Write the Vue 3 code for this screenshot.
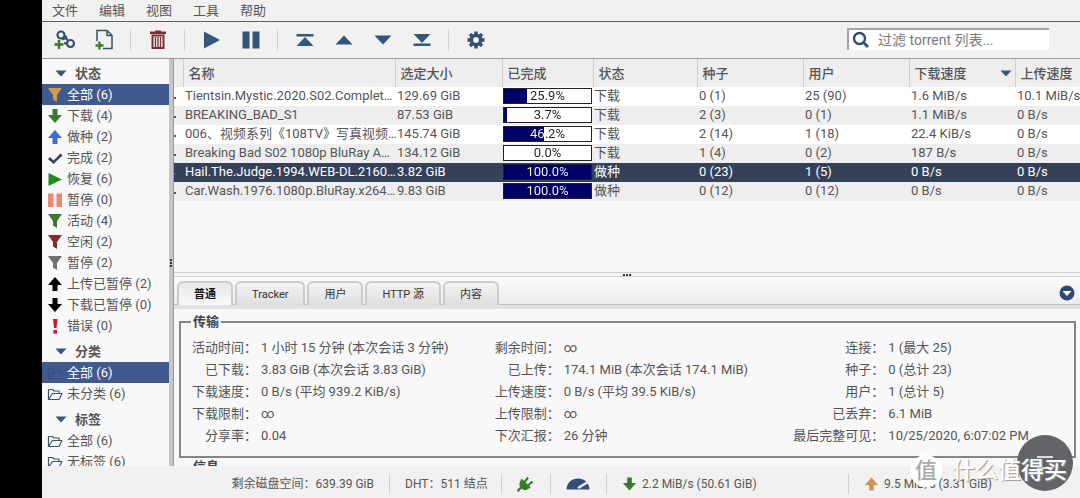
<script setup>
import { ref } from 'vue'

const menus = ['文件', '编辑', '视图', '工具', '帮助']

const sections = [
  {
    title: '状态',
    items: [
      { icon: 'funnel', color: '#d39a4e', label: '全部 (6)', selected: true },
      { icon: 'down', color: '#3b7a2a', label: '下载 (4)' },
      { icon: 'up', color: '#4468d8', label: '做种 (2)' },
      { icon: 'check', color: '#2c4663', label: '完成 (2)' },
      { icon: 'play', color: '#228b22', label: '恢复 (6)' },
      { icon: 'pause', color: '#ee8676', label: '暂停 (0)' },
      { icon: 'funnel', color: '#3b7a2a', label: '活动 (4)' },
      { icon: 'funnel', color: '#7c2f33', label: '空闲 (2)' },
      { icon: 'funnel', color: '#717171', label: '暂停 (2)' },
      { icon: 'up', color: '#000000', label: '上传已暂停 (2)' },
      { icon: 'down', color: '#000000', label: '下载已暂停 (0)' },
      { icon: 'error', color: '#d01820', label: '错误 (0)' }
    ]
  },
  {
    title: '分类',
    items: [
      { icon: 'folder', color: '#34527c', label: '全部 (6)', selected: true },
      { icon: 'folder', color: '#3d566e', label: '未分类 (6)' }
    ]
  },
  {
    title: '标签',
    items: [
      { icon: 'folder', color: '#3d566e', label: '全部 (6)' },
      { icon: 'folder', color: '#3d566e', label: '无标签 (6)' }
    ]
  }
]

const columns = ['', '名称', '选定大小', '已完成', '状态', '种子', '用户', '下载速度', '上传速度']

const torrents = [
  { name: 'Tientsin.Mystic.2020.S02.Complet…', size: '129.69 GiB', done: 25.9, state: '下载', seeds: '0 (1)', peers: '25 (90)', down: '1.6 MiB/s', up: '10.1 MiB/s' },
  { name: 'BREAKING_BAD_S1', size: '87.53 GiB', done: 3.7, state: '下载', seeds: '2 (3)', peers: '0 (1)', down: '1.1 MiB/s', up: '0 B/s' },
  { name: '006、视频系列《108TV》写真视频…', size: '145.74 GiB', done: 46.2, state: '下载', seeds: '2 (14)', peers: '1 (18)', down: '22.4 KiB/s', up: '0 B/s' },
  { name: 'Breaking Bad S02 1080p BluRay A…', size: '134.12 GiB', done: 0, state: '下载', seeds: '1 (4)', peers: '0 (2)', down: '187 B/s', up: '0 B/s' },
  { name: 'Hail.The.Judge.1994.WEB-DL.2160…', size: '3.82 GiB', done: 100, state: '做种', seeds: '0 (23)', peers: '1 (5)', down: '0 B/s', up: '0 B/s', selected: true },
  { name: 'Car.Wash.1976.1080p.BluRay.x264…', size: '9.83 GiB', done: 100, state: '做种', seeds: '0 (12)', peers: '0 (12)', down: '0 B/s', up: '0 B/s' }
]

const tabs = ['普通', 'Tracker', '用户', 'HTTP 源', '内容']
const activeTab = ref('普通')
const filter = ref('')

const details = [
  [
    ['活动时间：', '1 小时 15 分钟 (本次会话 3 分钟)'],
    ['已下载：', '3.83 GiB (本次会话 3.83 GiB)'],
    ['下载速度：', '0 B/s (平均 939.2 KiB/s)'],
    ['下载限制：', '∞'],
    ['分享率：', '0.04']
  ],
  [
    ['剩余时间：', '∞'],
    ['已上传：', '174.1 MiB (本次会话 174.1 MiB)'],
    ['上传速度：', '0 B/s (平均 39.5 KiB/s)'],
    ['上传限制：', '∞'],
    ['下次汇报：', '26 分钟']
  ],
  [
    ['连接：', '1 (最大 25)'],
    ['种子：', '0 (总计 23)'],
    ['用户：', '1 (总计 5)'],
    ['已丢弃：', '6.1 MiB'],
    ['最后完整可见：', '10/25/2020, 6:07:02 PM']
  ]
]

const shapes = {
  funnel: 'M1 1H15L10 8V15L6 12.500V8Z',
  down: 'M5.500 1H10.500V7H15L8 15L1 7H5.500Z',
  up: 'M5.500 15H10.500V9H15L8 1L1 9H5.500Z',
  check: 'M3 7L6.500 10.500L13.500 3.500L15.500 5.500L6.500 14L1 9Z',
  play: 'M1.500 2L15 8.500L1.500 15Z',
  pause: 'M1 1.500H6.500V15H1ZM9.500 1.500H15V15H9.500Z',
  error: 'M6 1H10.500L9.500 10H7ZM6.300 12H10V15.500H6.300Z'
}

const barFill = (p) => ({ backgroundImage: `linear-gradient(90deg, #000066 ${p}%, #ffffff ${p}%)` })
const barText = (p) => ({ backgroundImage: `linear-gradient(90deg, #ffffff ${p}%, #222222 ${p}%)` })
</script>

<template>
  <div class="window">
    <nav class="menubar">
      <button v-for="m in menus" :key="m" type="button">{{ m }}</button>
    </nav>

    <header class="toolbar">
      <button type="button" aria-label="添加链接">
        <svg width="22" height="20" viewBox="0 0 22 20" fill="none">
          <circle cx="7" cy="5" r="3.500" stroke="#34506f" stroke-width="2.200" />
          <circle cx="16.500" cy="13.500" r="3.500" stroke="#34506f" stroke-width="2.200" />
          <path d="M8 9.500L12 8L14 11M10 13L13.500 14M11 5.500L13 8" stroke="#34506f" stroke-width="2" />
          <path d="M5 10V19M0.500 14.500H9.500" stroke="#3b7a2a" stroke-width="2.500" />
        </svg>
      </button>
      <button type="button" aria-label="添加文件">
        <svg width="20" height="22" viewBox="0 0 20 22" fill="none">
          <path d="M3 12V1.500H13L18 6.500V19.500H9M13 1.500V6.500H18" stroke="#34506f" stroke-width="1.500" />
          <path d="M5.500 12.500V20.500M1.500 16.500H9.500" stroke="#3b7a2a" stroke-width="2.300" />
        </svg>
      </button>
      <i class="sep"></i>
      <button type="button" aria-label="删除">
        <svg width="18" height="20" viewBox="0 0 18 20">
          <path d="M1 1.500H6V0.500H12V1.500H17V4H1Z" fill="#7c2f33" />
          <path d="M3.500 5.500V18H14.500V5.500Z" fill="none" stroke="#7c2f33" stroke-width="2" />
          <path d="M6.500 7V17M9 7V17M11.500 7V17" stroke="#7c2f33" stroke-width="1.300" />
        </svg>
      </button>
      <i class="sep"></i>
      <button type="button" aria-label="恢复">
        <svg width="18" height="18" viewBox="0 0 18 18"><path d="M1 0.500L17 9L1 17.500Z" fill="#34567a" /></svg>
      </button>
      <button type="button" aria-label="暂停">
        <svg width="18" height="18" viewBox="0 0 18 18"><path d="M0.500 0.500H7.500V17.500H0.500ZM10.500 0.500H17.500V17.500H10.500Z" fill="#34567a" /></svg>
      </button>
      <i class="sep"></i>
      <button type="button" aria-label="移到顶部">
        <svg width="18" height="12" viewBox="0 0 18 12"><path d="M0.500 0H17.500V2.500H0.500ZM0.500 12L9 3L17.500 12Z" fill="#34567a" /></svg>
      </button>
      <button type="button" aria-label="上移">
        <svg width="18" height="10" viewBox="0 0 18 10"><path d="M0.500 9.500L9 0.500L17.500 9.500Z" fill="#34567a" /></svg>
      </button>
      <button type="button" aria-label="下移">
        <svg width="18" height="10" viewBox="0 0 18 10"><path d="M0.500 0.500L9 9.500L17.500 0.500Z" fill="#34567a" /></svg>
      </button>
      <button type="button" aria-label="移到底部">
        <svg width="18" height="12" viewBox="0 0 18 12"><path d="M0.500 0H17.500L9 9ZM0.500 9.500H17.500V12H0.500Z" fill="#34567a" /></svg>
      </button>
      <i class="sep"></i>
      <button type="button" aria-label="选项">
        <svg width="18" height="18" viewBox="0 0 18 18" fill="none" stroke="#34506f">
          <circle cx="9" cy="9" r="4.700" stroke-width="3.600" />
          <path d="M9 0.500V3M9 15V17.500M0.500 9H3M15 9H17.500M3 3L4.800 4.800M13.200 13.200L15 15M3 15L4.800 13.200M13.200 4.800L15 3" stroke-width="3.400" />
        </svg>
      </button>
      <label class="search">
        <svg width="18" height="18" viewBox="0 0 18 18" fill="none" stroke="#2f4c70">
          <circle cx="7.500" cy="7.500" r="5.500" stroke-width="2.400" />
          <path d="M11.500 11.500L16 16" stroke-width="2.800" />
        </svg>
        <input v-model="filter" type="text" placeholder="过滤 torrent 列表..." aria-label="过滤 torrent 列表">
      </label>
    </header>

    <div class="body">
      <aside class="sidebar">
        <section v-for="s in sections" :key="s.title">
          <h2>
            <button type="button">
              <svg width="12" height="7" viewBox="0 0 12 7"><path d="M0.500 0.500H11.500L6 6.500Z" fill="#34567a" /></svg>
              {{ s.title }}
            </button>
          </h2>
          <ul>
            <li v-for="i in s.items" :key="i.label + i.color">
              <a href="#" :class="{ selected: i.selected }">
                <svg width="16" height="16" viewBox="0 0 16 16">
                  <path v-if="i.icon === 'folder'" d="M1.500 13.500V3.500H5.500L7 5H12V7M1.500 13.500L5.500 7.500H15L12 13.500Z" fill="none" :stroke="i.color" stroke-width="1.200" stroke-linejoin="round" />
                  <path v-else :d="shapes[i.icon]" :fill="i.color" />
                </svg>
                {{ i.label }}
              </a>
            </li>
          </ul>
        </section>
      </aside>

      <div class="vsplit"><i></i><i></i><i></i></div>

      <main class="content">
        <div class="torrents">
          <table>
            <colgroup>
              <col class="c-dot"><col class="c-name"><col class="c-size"><col class="c-done"><col class="c-state">
              <col class="c-num"><col class="c-num"><col class="c-num"><col class="c-num">
            </colgroup>
            <thead>
              <tr>
                <th v-for="c in columns" :key="c" scope="col">
                  <span class="head">
                    {{ c }}
                    <svg v-if="c === '下载速度'" width="12" height="7" viewBox="0 0 12 7"><path d="M0.500 0.500H11.500L6 6.500Z" fill="#34567a" /></svg>
                  </span>
                </th>
              </tr>
            </thead>
            <tbody>
              <tr v-for="t in torrents" :key="t.name" :class="{ selected: t.selected }">
                <td class="dot"><i></i></td>
                <td>{{ t.name }}</td>
                <td>{{ t.size }}</td>
                <td class="progress">
                  <div class="bar" :style="barFill(t.done)"><span :style="barText(t.done)">{{ t.done.toFixed(1) }}%</span></div>
                </td>
                <td class="state">{{ t.state }}</td>
                <td>{{ t.seeds }}</td>
                <td>{{ t.peers }}</td>
                <td>{{ t.down }}</td>
                <td>{{ t.up }}</td>
              </tr>
            </tbody>
          </table>
        </div>

        <div class="hsplit"><i></i><i></i><i></i></div>

        <div class="tabs">
          <button v-for="t in tabs" :key="t" type="button" :class="{ active: t === activeTab }" @click="activeTab = t">{{ t }}</button>
          <button type="button" class="collapse" aria-label="折叠">
            <svg width="16" height="16" viewBox="0 0 16 16"><circle cx="8" cy="8" r="7.500" fill="#2f4a70" /><path d="M3.500 6H12.500L8 11Z" fill="#fff" /></svg>
          </button>
        </div>

        <div class="panel">
          <fieldset>
            <legend>传输</legend>
            <div class="groups">
              <dl v-for="(g, n) in details" :key="n" :class="'g' + n">
                <template v-for="row in g" :key="row[0]">
                  <dt>{{ row[0] }}</dt>
                  <dd>{{ row[1] }}</dd>
                </template>
              </dl>
            </div>
          </fieldset>
          <fieldset>
            <legend>信息</legend>
          </fieldset>
        </div>
      </main>
    </div>

    <footer class="status">
      <span class="disk">剩余磁盘空间：639.39 GiB</span>
      <span>DHT：511 结点</span>
      <span>
        <button type="button" aria-label="连接状态">
          <svg width="16" height="16" viewBox="0 0 16 16">
            <path d="M1 15.500C1.500 12.500 3 13 4.500 11.500" fill="none" stroke="#3b7a2a" stroke-width="2.400" />
            <path d="M4.500 4L12.500 11.500C10.500 14.500 7 15 4.500 12.500C1.500 10 2 6 4.500 4Z" fill="#3b7a2a" />
            <path d="M4 3.500L13 12M7 7L11 1.500M10.500 10L15.500 5.500" stroke="#3b7a2a" stroke-width="2.200" />
          </svg>
        </button>
      </span>
      <span>
        <button type="button" aria-label="备用速度限制">
          <svg width="24" height="12" viewBox="0 0 24 12">
            <path d="M0.500 11.500C1 4 6 0.500 12 0.500S23 4 23.500 11.500Z" fill="#34507a" />
            <path d="M12 10L22 4" stroke="#f1f1f1" stroke-width="2.400" />
          </svg>
        </button>
      </span>
      <span>
        <svg width="15" height="16" viewBox="0 0 16 16"><path :d="shapes.down" fill="#3b7a2a" /></svg>
        2.2 MiB/s (50.61 GiB)
      </span>
      <span>
        <svg width="15" height="16" viewBox="0 0 16 16"><path :d="shapes.up" fill="#cf9450" /></svg>
        9.5 MiB/s (3.31 GiB)
      </span>
    </footer>

    <button type="button" class="fab" aria-label="菜单"><i></i><i></i></button>
    <div class="mark"><b>值</b><span>什么值得买</span></div>
  </div>
</template>

<style>
body {
  background: #000;
}
</style>

<style scoped>
.window {
  position: relative;
  display: flex;
  flex-direction: column;
  height: 100vh;
  box-sizing: border-box;
  padding-left: 42px;
  overflow: hidden;
  background: linear-gradient(90deg, #000 42px, #f1f1f1 42px);
  color: #555;
  font: 12px/19px Roboto, "Noto Sans CJK SC", sans-serif;
}
button {
  margin: 0;
  padding: 0;
  border: 0;
  background: none;
  color: inherit;
  font: inherit;
}
svg {
  flex: none;
  display: block;
}

.menubar {
  display: flex;
  flex: none;
  gap: 1px;
  height: 21px;
  border-bottom: 1px solid #606060;
}
.menubar button {
  padding: 0 10px;
  font-size: 13px;
}

.toolbar {
  display: flex;
  align-items: center;
  flex: none;
  height: 36px;
  padding: 0 31px 0 3px;
  border-bottom: 1px solid #9a9a9a;
}
.toolbar button {
  display: flex;
  align-items: center;
  justify-content: center;
  width: 39px;
  height: 30px;
}
.sep {
  width: 1px;
  height: 22px;
  margin: 0 7px;
  background: #cfcfcf;
}
.search {
  display: flex;
  align-items: center;
  gap: 8px;
  box-sizing: border-box;
  width: 202px;
  height: 22px;
  margin: 0 0 3px auto;
  padding-left: 3px;
  border: solid #a4a4a4;
  border-width: 2px 0 0 2px;
  background: #fff;
}
.search input {
  flex: 1;
  min-width: 0;
  padding: 0;
  border: 0;
  outline: 0;
  background: none;
  color: #555;
  font: 14px/18px Roboto, "Noto Sans CJK SC", sans-serif;
}
.search input::placeholder {
  color: #7b7b7b;
}

.body {
  display: flex;
  flex: 1;
  min-height: 0;
  background: #f8f8f8;
}
.sidebar {
  flex: none;
  width: 127px;
  overflow: hidden;
  font-size: 13px;
}
section + section {
  margin-top: 1px;
}
h2 {
  box-sizing: border-box;
  height: 25px;
  margin: 0;
  padding: 5px 0 0 13px;
  font-size: 13px;
  line-height: 19px;
}
h2 button {
  display: flex;
  align-items: center;
  gap: 8px;
}
ul {
  margin: 0;
  padding: 0;
  list-style: none;
}
li a {
  display: flex;
  align-items: center;
  gap: 4px;
  height: 21px;
  padding-left: 5px;
  color: inherit;
  text-decoration: none;
  white-space: nowrap;
}
li a.selected {
  background: #415a8e;
  color: #fff;
}

.vsplit {
  display: flex;
  flex-direction: column;
  align-items: center;
  justify-content: center;
  gap: 1px;
  flex: none;
  box-sizing: border-box;
  width: 5px;
  border-right: 1px solid #979797;
  background: #c6c6c6;
}
.vsplit i,
.hsplit i {
  width: 2px;
  height: 2px;
  background: #333;
}

.content {
  display: flex;
  flex-direction: column;
  flex: 1;
  min-width: 0;
}
.torrents {
  flex: none;
  height: 213px;
  overflow: hidden;
}
table {
  width: 947px;
  table-layout: fixed;
  border-collapse: collapse;
  font-size: 13px;
}
.c-dot { width: 9px; }
.c-name { width: 212px; }
.c-size { width: 107px; }
.c-done { width: 91px; }
.c-state { width: 104px; }
.c-num { width: 106px; }
th {
  height: 28px;
  padding: 0 3px 0 5px;
  border-right: 1px solid #cdcdcd;
  background: #eee;
  font-weight: 500;
  text-align: left;
}
th:first-child {
  padding: 0;
}
.head {
  display: flex;
  align-items: center;
  justify-content: space-between;
}
td {
  height: 19px;
  padding: 0 0 0 2px;
  line-height: 17px;
  vertical-align: top;
  white-space: nowrap;
}
tbody tr:nth-child(odd) { background: #fff; }
tbody tr:nth-child(even) { background: #eee; }
tbody tr.selected {
  background: #354158;
  color: #fff;
}
td.dot {
  padding: 0;
}
.dot i {
  display: block;
  width: 2px;
  height: 2px;
  margin-top: 10px;
  background: #555;
}
td.progress {
  box-sizing: border-box;
  padding: 1px 1px 0;
}
td.state {
  padding-left: 1px;
}
.bar {
  box-sizing: border-box;
  height: 16px;
  border: 1px solid #222;
  line-height: 14px;
  text-align: center;
}
.bar span {
  display: block;
  background-clip: text;
  color: transparent;
}

.hsplit {
  display: flex;
  align-items: center;
  justify-content: center;
  gap: 1px;
  flex: none;
  box-sizing: border-box;
  height: 5px;
  border: solid #d0d0d0;
  border-width: 1px 0;
  background: #f4f4f4;
}
.tabs {
  display: flex;
  align-items: flex-end;
  gap: 2px;
  flex: none;
  box-sizing: border-box;
  height: 32px;
  padding: 0 5px 0 3px;
  border-bottom: 4px solid #e2e2e2;
  background: linear-gradient(#fafafa, #ececec);
  box-shadow: inset 0 -1px #bdbdbd;
  color: #333;
}
.tabs button {
  box-sizing: border-box;
  height: 24px;
  padding: 0 15px;
  border: 2px solid #cbcbcb;
  border-bottom: 0;
  border-radius: 6px 6px 0 0;
  background: linear-gradient(#f4f4f4, #dedede);
  font-size: 11px;
}
.tabs button.active {
  background: linear-gradient(#e9e9e9, #f8f8f8);
  color: #111;
  font-weight: 700;
}
.tabs .collapse {
  margin: 0 0 0 auto;
  padding: 0;
  border: 0;
  background: none;
}

.panel {
  flex: 1;
  min-height: 0;
  padding: 4px 4px 0 5px;
  overflow: hidden;
}
fieldset {
  min-width: 0;
  margin: 0;
  padding: 0;
  border: 2px solid #858585;
}
legend {
  margin-left: 10px;
  padding: 0 2px;
  color: #444;
  font-size: 13px;
  font-weight: 700;
  line-height: 18px;
}
.groups {
  display: grid;
  grid-template-columns: 1fr 1fr 1fr;
  padding: 6px 0 9px;
}
dl {
  display: grid;
  grid-template-columns: 76px 1fr;
  column-gap: 4px;
  margin: 0;
  line-height: 22px;
  font-size: 13px;
  white-space: nowrap;
}
.g1 { grid-template-columns: 81px 1fr; }
.g2 { grid-template-columns: 108px 1fr; }
dt {
  text-align: right;
}
dd {
  margin: 0;
}

.status {
  display: grid;
  grid-template-columns: 347px 112px 49px 56px 242px 1fr;
  flex: none;
  height: 32px;
  padding-top: 4px;
  box-sizing: border-box;
  align-items: center;
  background: #f1f1f1;
}
.status > span {
  display: flex;
  align-items: center;
  gap: 5px;
  box-sizing: border-box;
  height: 20px;
  padding-left: 15px;
  border-left: 1px solid #cfcfcf;
  white-space: nowrap;
}
.status > .disk {
  justify-content: flex-end;
  padding-right: 15px;
  border-left: 0;
}

.fab {
  position: absolute;
  right: 7px;
  bottom: 7px;
  display: flex;
  flex-direction: column;
  align-items: center;
  gap: 9px;
  width: 56px;
  height: 56px;
  padding-top: 21px;
  border-radius: 50%;
  background: #636467;
}
.fab i {
  width: 16px;
  height: 2px;
  background: #ddd;
}
.mark {
  position: absolute;
  right: 13px;
  bottom: 11px;
  display: flex;
  align-items: center;
  gap: 10px;
  color: #fff;
  font-size: 23px;
  font-weight: 500;
  line-height: 32px;
  text-shadow: 1px 1px 1px #999;
}
.mark b {
  width: 32px;
  height: 32px;
  border-radius: 50%;
  background: #fff;
  color: #aaa;
  font-size: 22px;
  font-weight: 500;
  text-align: center;
  text-shadow: none;
}
</style>
